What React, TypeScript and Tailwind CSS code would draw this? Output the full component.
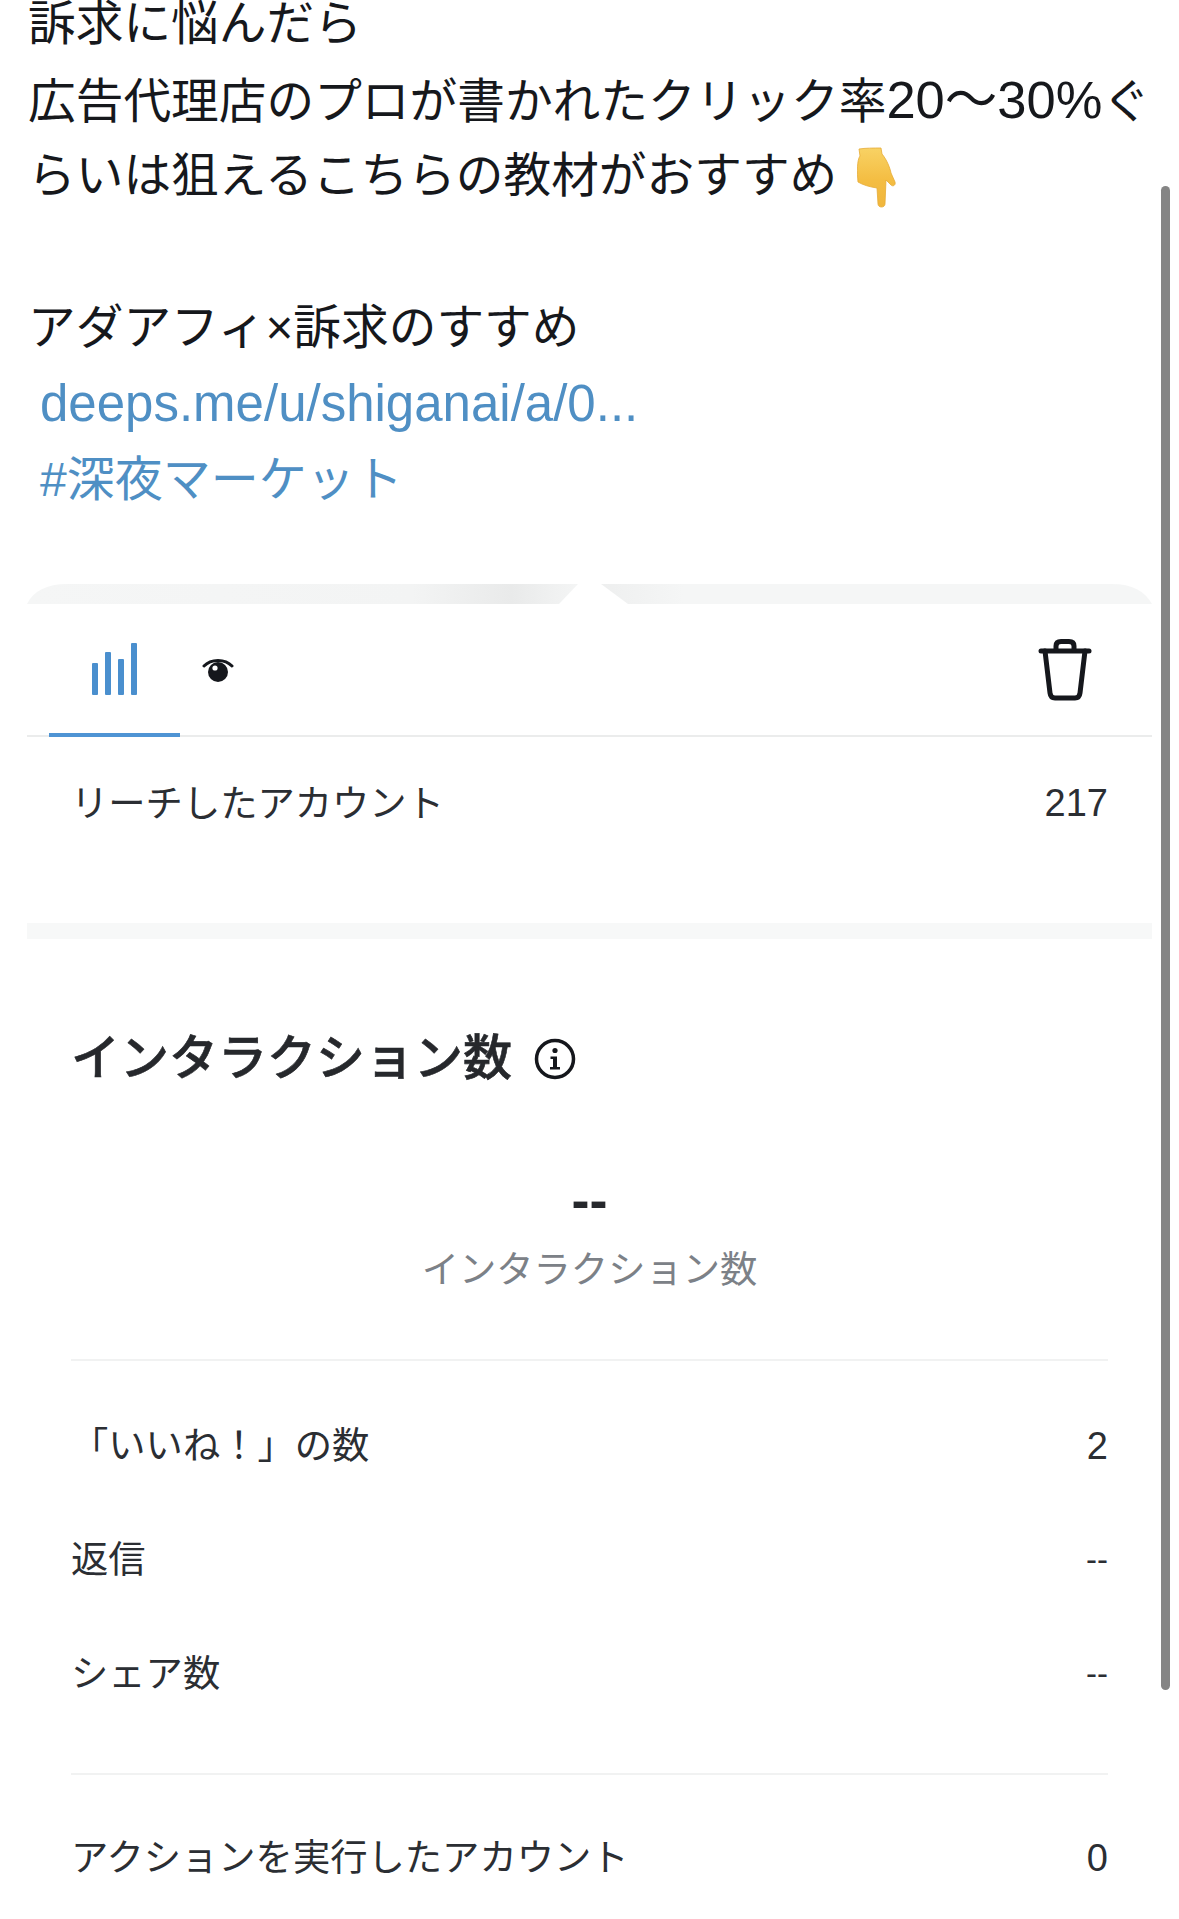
const jp = "font-['Liberation_Sans','Noto_Sans_CJK_JP',sans-serif]";

function BarsIcon() {
  return (
    <svg width="46" height="52" viewBox="0 0 46 52" fill="#4a8fce" className="mt-[1px]">
      <rect x="0" y="20" width="6" height="32" rx="1" />
      <rect x="13" y="9" width="6" height="43" rx="1" />
      <rect x="26" y="16" width="6" height="36" rx="1" />
      <rect x="39" y="0" width="6" height="52" rx="1" />
    </svg>
  );
}

function EyeIcon() {
  return (
    <svg width="32" height="26" viewBox="0 0 32 26" fill="none">
      <path d="M2 9C9 1.5 23 1.5 30 9" stroke="#15171c" strokeWidth="3" strokeLinecap="round" />
      <circle cx="16" cy="15" r="10" fill="#15171c" />
      <circle cx="13" cy="11" r="2.6" fill="#ffffff" />
    </svg>
  );
}

function TrashIcon() {
  return (
    <svg width="54" height="62" viewBox="0 0 54 62" fill="none" stroke="#15171c" strokeWidth="5" strokeLinejoin="round" strokeLinecap="round">
      <path d="M3 12H51" />
      <path d="M7 12L12 54C12.4 57.5 14 59 17 59H37C40 59 41.6 57.5 42 54L47 12" />
      <path d="M18 11V7C18 4 20 2.5 23 2.5H31C34 2.5 36 4 36 7V11" />
    </svg>
  );
}

function InfoIcon() {
  return (
    <svg width="42" height="42" viewBox="0 0 42 42" fill="none">
      <circle cx="21" cy="21" r="18.5" stroke="#15171c" strokeWidth="3.5" />
      <circle cx="21" cy="12.5" r="2.6" fill="#15171c" />
      <path d="M16.5 18.5H23V29H26V31.5H16V29H19V21H16.5Z" fill="#15171c" />
    </svg>
  );
}

function PointDown() {
  return (
    <svg width="40" height="62" viewBox="0 0 40 62">
      <defs>
        <linearGradient id="handFill" x1="0" x2="0" y1="0" y2="1">
          <stop offset="0" stopColor="#f8d264" />
          <stop offset="0.55" stopColor="#f4bd42" />
          <stop offset="1" stopColor="#f0b63c" />
        </linearGradient>
      </defs>
      <path
        d="M2 2C8 1 17 1 24 1L25 7C30 13 33 21 34 26L38 35C39 38 36 40 34 38L29 33L28 57C28 61 21 61 21 57L20 41C13 40 6 38 1 35C0 25 0 13 3 9Z"
        fill="url(#handFill)"
        stroke="#e6ab36"
        strokeWidth="0.8"
      />
    </svg>
  );
}

function StatRow({ label, value }: { label: string; value: string }) {
  return (
    <div className="flex items-center justify-between h-[114px] text-[37.3px] text-[#2b2e33]">
      <span className="pt-[2px]">{label}</span>
      <span className={value === "--" ? "text-[33px]" : "text-[38px]"}>{value}</span>
    </div>
  );
}

export default function App() {
  return (
    <div className={`relative h-[1919px] overflow-hidden bg-white ${jp}`}>
      {/* scrollbar */}
      <div className="absolute left-[1161px] top-[186px] w-[9px] h-[1504px] rounded-full bg-[#858585]" />

      <div className="-mt-[14px] pl-[28px] pr-[20px] text-[47.7px] leading-[76px] text-[#16181c]">
        <div className="h-[76px]">訴求に悩んだら</div>
        <div className="h-[76px] whitespace-nowrap">
          広告代理店のプロが書かれたクリック率<span className="text-[52.5px]">20〜30%</span>ぐ
        </div>
        <div className="flex h-[76px] items-center whitespace-nowrap">
          らいは狙えるこちらの教材がおすすめ
          <span className="ml-[20px] mt-[3px] flex"><PointDown /></span>
        </div>
        <div className="h-[76px]" />
        <div className="h-[76px]">アダアフィ×訴求のすすめ</div>
        <div className="h-[76px] pl-[12px] text-[51px] text-[#4f8fc4]">deeps.me/u/shiganai/a/0...</div>
        <div className="h-[76px] pl-[12px] text-[48px] text-[#4f8fc4]">#深夜マーケット</div>
      </div>

      <div className="mt-[66px] ml-[27px] w-[1125px]">
        <svg width="1125" height="20" viewBox="0 0 1125 20" className="block">
          <defs>
            <linearGradient id="leftStrip" x1="0" x2="1" y1="0" y2="0">
              <stop offset="0" stopColor="#f5f6f6" />
              <stop offset="0.7" stopColor="#f3f4f4" />
              <stop offset="0.88" stopColor="#e9eaea" />
              <stop offset="1" stopColor="#f4f5f5" />
            </linearGradient>
            <linearGradient id="rightStrip" x1="0" x2="1" y1="0" y2="0">
              <stop offset="0" stopColor="#eeefef" />
              <stop offset="0.15" stopColor="#f5f6f6" />
              <stop offset="1" stopColor="#f5f6f6" />
            </linearGradient>
          </defs>
          <path d="M0 20C6 7 20 0 40 0H551L532 20Z" fill="url(#leftStrip)" />
          <path d="M574 0H1085C1105 0 1118 7 1125 20H601Z" fill="url(#rightStrip)" />
        </svg>

        <div className="flex items-center justify-between h-[133px] border-b-2 border-[#ebecec] relative">
          <div className="flex items-center">
            <div className="flex items-center justify-center w-[131px] h-[133px] ml-[22px] border-b-4 -mb-[2px] border-[#4f94d4]">
              <BarsIcon />
            </div>
            <div className="ml-[22px] flex"><EyeIcon /></div>
          </div>
          <div className="mr-[60px] flex"><TrashIcon /></div>
        </div>

        <div className="px-[44px] h-[186px] pt-[6px]">
          <div className="flex items-center justify-between h-[120px] text-[37.3px] text-[#2b2e33]">
            <span className="pt-[4px]">リーチしたアカウント</span>
            <span className="text-[38px]">217</span>
          </div>
        </div>

        <div className="h-[16px] bg-[#f7f8f8]" />

        <div className="px-[44px]">
          <div className="flex items-center gap-[22px] mt-[90px] h-[60px]">
            <span className="text-[49px] font-medium text-[#26282c] [-webkit-text-stroke:0.6px_#26282c]">インタラクション数</span>
            <InfoIcon />
          </div>

          <div className="flex flex-col items-center mt-[89px]">
            <div className="text-[54px] leading-[44px] font-bold text-[#26282c]">--</div>
            <div className="mt-[26px] text-[37.3px] leading-[44px] text-[#7c8187]">インタラクション数</div>
          </div>

          <div className="mt-[67px] pt-[28px] pb-[42px] border-t-2 border-[#f1f2f2]">
            <StatRow label="「いいね！」の数" value="2" />
            <StatRow label="返信" value="--" />
            <StatRow label="シェア数" value="--" />
          </div>

          <div className="pt-[26px] border-t-2 border-[#f1f2f2]">
            <StatRow label="アクションを実行したアカウント" value="0" />
          </div>
        </div>
      </div>
    </div>
  );
}
